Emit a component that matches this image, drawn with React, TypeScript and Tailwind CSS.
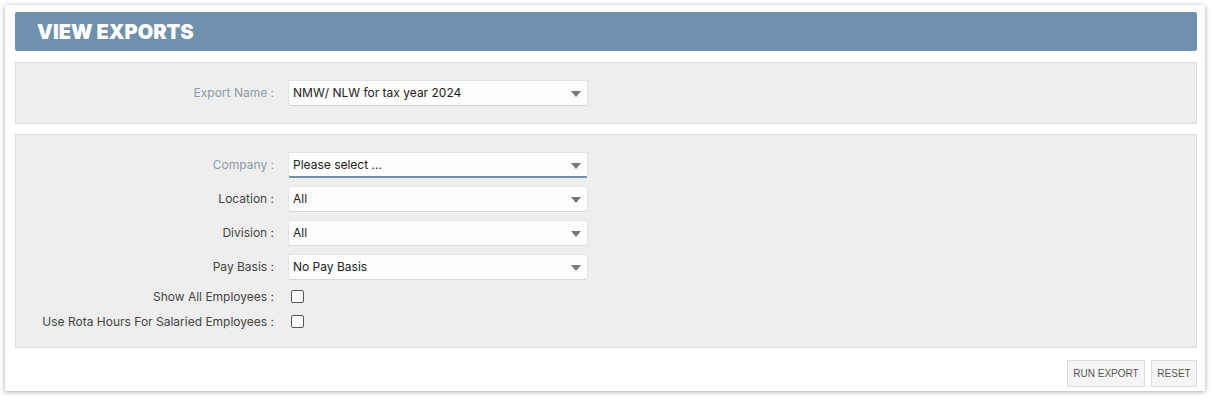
import React from "react";

const Caret = () => (
	<svg width="10" height="6" viewBox="0 0 10 6" className="absolute right-[6px] top-[10px]">
		<path d="M0 0 H10 L5 6 Z" fill="#777" />
	</svg>
);

const SelectBox = ({ value, active }: { value: string; active?: boolean }) => (
	<div
		className={`relative w-[300px] h-[26px] rounded-[3px] bg-[#fdfdfd] border border-[#e4e4e4] pl-[4px] flex items-center text-[12px] text-[#222] ${
			active ? "border-b-2 border-b-[#6f8faa]" : "border-b-[#d6d6d6]"
		}`}
	>
		{value}
		<Caret />
	</div>
);

const Label = ({ text, muted }: { text: string; muted?: boolean }) => (
	<div className={`text-right text-[12px] pr-[14px] ${muted ? "text-[#8a9cad]" : "text-[#444]"}`}>{text}</div>
);

const CheckBox = () => (
	<div className="ml-[3px] w-[13px] h-[13px] rounded-[2px] border border-[#555] bg-white" />
);

export default function App() {
	return (
		<div className="bg-white min-h-[400px] pt-[5px] px-[5px]" style={{ fontFamily: "Inter, 'Noto Sans', sans-serif" }}>
			<div className="w-[1200px] bg-white shadow-[0_1px_5px_rgba(0,0,0,0.35)] pl-[10px] pr-[8px] pt-[7px] pb-[4px]">
				<div className="h-[39px] bg-[#6f91ad] rounded-[2px] flex items-center pl-[22px]">
					<h1 className="text-white text-[20px] font-black">VIEW EXPORTS</h1>
				</div>

				<div className="mt-[11px] h-[62px] bg-[#eeeeee] border border-[#dcdcdc] grid grid-cols-[272px_auto] items-center content-center">
					<Label text="Export Name :" muted />
					<SelectBox value="NMW/ NLW for tax year 2024" />
				</div>

				<div className="mt-[10px] h-[214px] bg-[#eeeeee] border border-[#dcdcdc] pt-[17px]">
					<div className="grid grid-cols-[272px_auto] items-center gap-y-[8px]">
						<Label text="Company :" muted />
						<SelectBox value="Please select ..." active />
						<Label text="Location :" />
						<SelectBox value="All" />
						<Label text="Division :" />
						<SelectBox value="All" />
						<Label text="Pay Basis :" />
						<SelectBox value="No Pay Basis" />
					</div>
					<div className="grid grid-cols-[272px_auto] items-center mt-[4px] auto-rows-[25px]">
						<Label text="Show All Employees :" />
						<CheckBox />
						<Label text="Use Rota Hours For Salaried Employees :" />
						<CheckBox />
					</div>
				</div>

				<div className="flex justify-end gap-[6px] mt-[12px]" style={{ fontFamily: "'Liberation Sans', Arial, sans-serif" }}>
					<button className="h-[27px] w-[78px] bg-[#f5f5f5] border border-[#dddddd] text-[10px] text-[#555]">RUN EXPORT</button>
					<button className="h-[27px] w-[46px] bg-[#f5f5f5] border border-[#dddddd] text-[10px] text-[#555]">RESET</button>
				</div>
			</div>
		</div>
	);
}
